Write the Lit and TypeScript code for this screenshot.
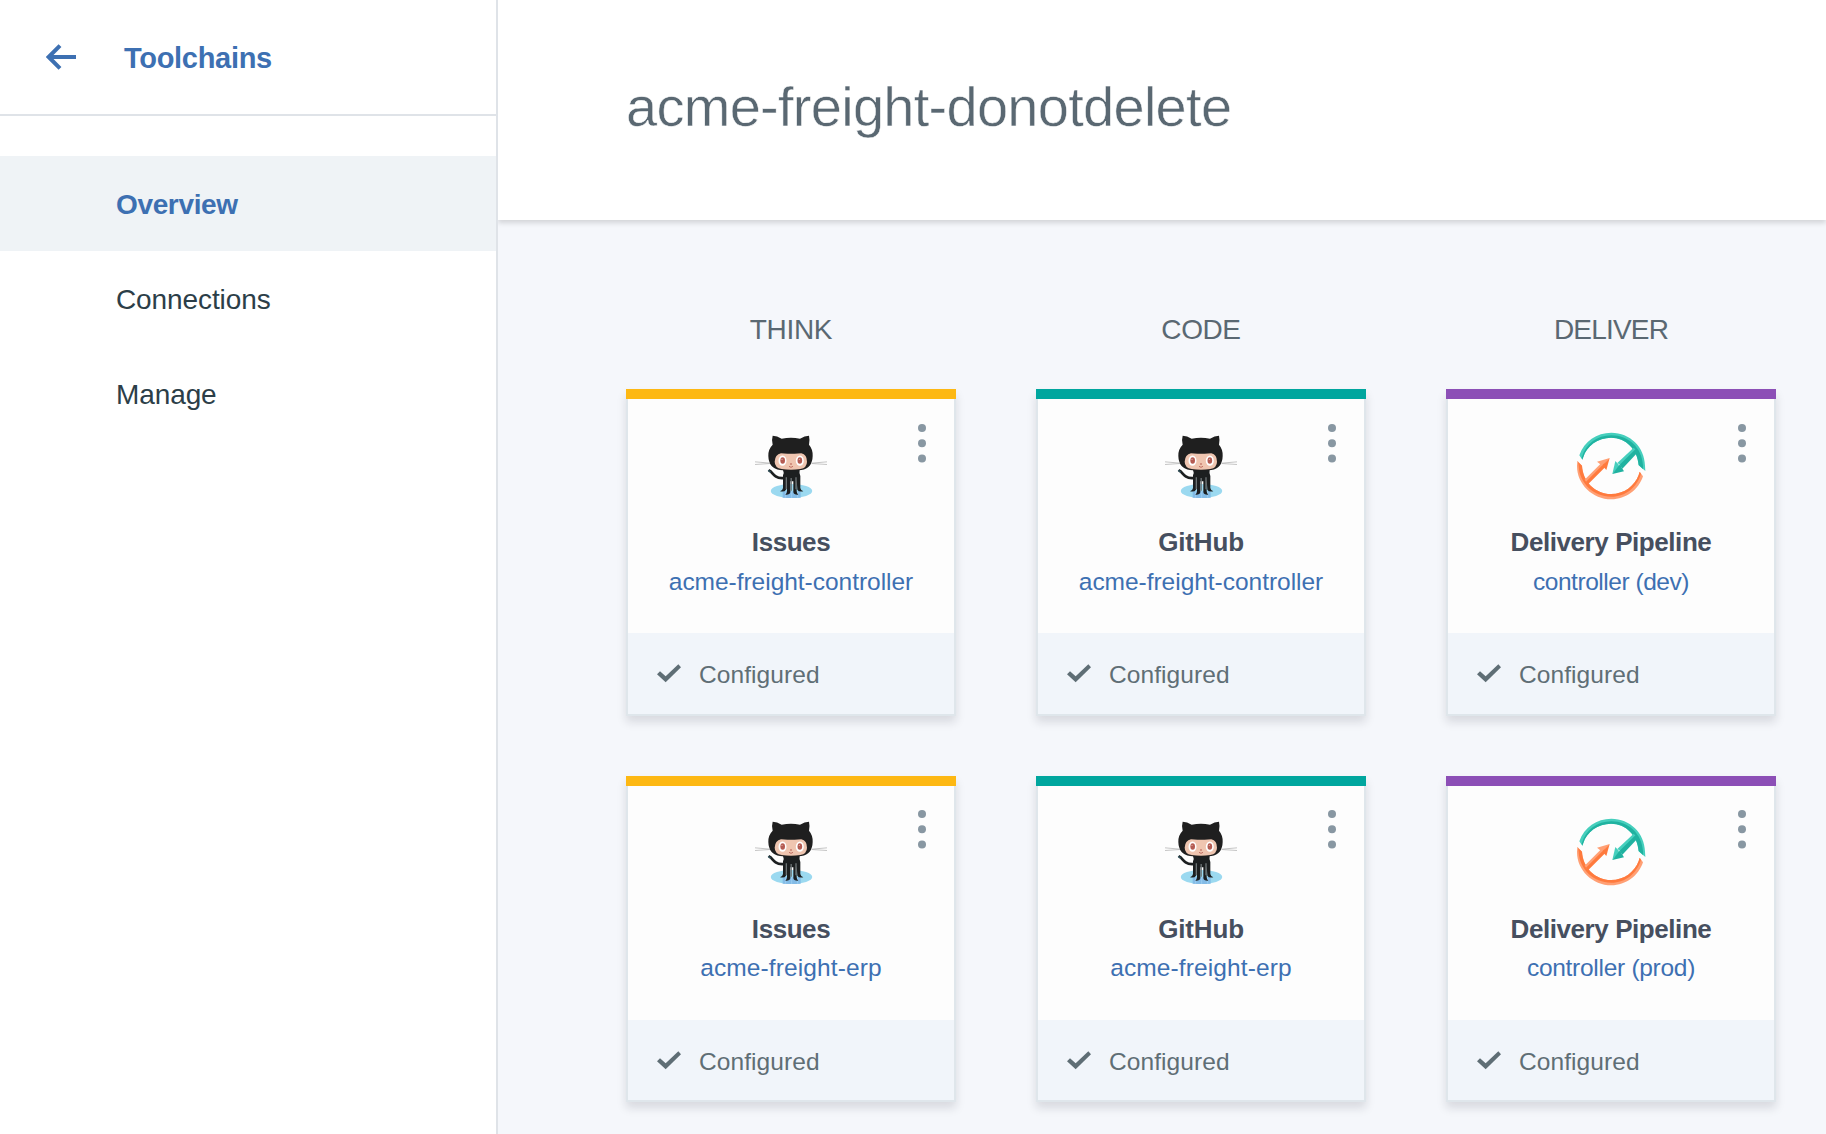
import { LitElement, html, svg, css } from "lit";
import { customElement, property } from "lit/decorators.js";

interface Tool {
  kind: "github" | "pipeline";
  name: string;
  nameTracking: number;
  link: string;
  linkTracking: number;
}

interface Stage {
  title: string;
  tracking: number;
  tone: "think" | "code" | "deliver";
  tools: Tool[];
}

const issues = { kind: "github", name: "Issues", nameTracking: -0.44 } as const;
const github = { kind: "github", name: "GitHub", nameTracking: -0.15 } as const;
const pipeline = { kind: "pipeline", name: "Delivery Pipeline", nameTracking: -0.43 } as const;
const controller = { link: "acme-freight-controller", linkTracking: -0.03 };
const erp = { link: "acme-freight-erp", linkTracking: 0.12 };

const STAGES: Stage[] = [
  {
    title: "THINK",
    tracking: -0.3,
    tone: "think",
    tools: [{ ...issues, ...controller }, { ...issues, ...erp }],
  },
  {
    title: "CODE",
    tracking: -0.4,
    tone: "code",
    tools: [{ ...github, ...controller }, { ...github, ...erp }],
  },
  {
    title: "DELIVER",
    tracking: -0.8,
    tone: "deliver",
    tools: [
      { ...pipeline, link: "controller (dev)", linkTracking: -0.46 },
      { ...pipeline, link: "controller (prod)", linkTracking: -0.28 },
    ],
  },
];

const octocat = svg`
  <svg class="logo" width="92" height="80" viewBox="0 -9 276 240" fill="none">
    <ellipse cx="139.500" cy="189" rx="62" ry="21" fill="#9bd9f0"/>
    <path d="M113 190h54v19q-27 2-54 0z" fill="#83bbe6"/>
    <path d="M122 190v19M140 190v20M158 190v19" stroke="#9bcdf0" stroke-width="3"/>
    <path d="M30 101.500l46 4M30 109.500l46-3M246 101.500l-46 4M246 109.500l-46-3" stroke="#a9a9a9" stroke-width="2"/>
    <path d="M71 127c10 4 12 12 21 18q10 7 26 5" stroke="#1c1f20" stroke-width="8"/>
    <path d="M69 127q5 2 8 6" stroke="#31545f" stroke-width="4"/>
    <path d="M114 126h50q-2 8 2 18v36q1 7 9 10-14 3-18-5l-2-30v34q0 8 5 11-14 1-15-8v-32h-9v32q-1 9-15 8 5-3 5-11v-34l-3 30q-4 8-18 5 8-3 9-10v-38q4-8 0-16z" fill="#1c1f20"/>
    <path d="M124 148v36M138.500 150v38M153 148v36" stroke="#6c7375" stroke-width="4"/>
    <path d="M83 23q13 0 27 9 28-5 55 0 14-9 27-9 3 13 0 27 12 14 11 34-1 37-34 42-32 4-64 0-34-5-35-42-1-20 13-34-4-13 0-27z" fill="#1f1f1f"/>
    <path d="M108 76q14 2 30 1 16 1 31-1 17 4 17 25 0 18-20 22-28 5-56 0-21-4-21-22 1-21 19-25z" fill="#efc5b0"/>
    <ellipse cx="112.500" cy="98" rx="12" ry="15.500" fill="#fff"/>
    <ellipse cx="164.500" cy="98" rx="12" ry="15.500" fill="#fff"/>
    <ellipse cx="113" cy="97.500" rx="7" ry="10" fill="#b45b52"/>
    <ellipse cx="164.500" cy="97.500" rx="7" ry="10" fill="#b45b52"/>
    <circle cx="111" cy="94" r="2" fill="#e6b5ad"/>
    <circle cx="163" cy="94" r="2" fill="#e6b5ad"/>
    <ellipse cx="138" cy="108" rx="2.800" ry="2" fill="#b45b52"/>
    <path d="M132 115q6 6 12 0" stroke="#b45b52" stroke-width="2.500"/>
  </svg>`;

const pipelineLogo = svg`
  <svg class="logo" width="82" height="80" viewBox="0 0 246 240" fill="none">
    <path d="M28 91C43 48 80 23 124 23c56 0 100 43 101 99l1 16-20-17C203 74 168 38 123 38 83 38 50 63 40 96l-3 8z" fill="#46cfbd"/>
    <path d="M35 98C47 57 81 31 124 31c52 0 92 38 95 90v11l-13-12C203 74 168 38 123 38 83 38 50 63 40 96l-3 8z" fill="#20b2a0"/>
    <path d="M191 68l7 7-45 46-11-7z" fill="#46cfbd"/>
    <path d="M197 72l8 8-48 51-8-12z" fill="#20b2a0"/>
    <path d="M127 147l9-39 9 10 3 7z" fill="#46cfbd"/>
    <path d="M127 147l23-29 4 8 8 13z" fill="#20b2a0"/>
    <path d="M22 107l14 15c2 46 39 85 87 85 39 0 71-24 83-57l3-10 10 14c-13 40-51 69-95 69C68 223 21 178 21 123z" fill="#ffa075"/>
    <path d="M24 111l12 11c2 46 39 85 87 85 39 0 71-24 83-57l3-10 4 6c-12 41-46 69-89 69C70 215 28 173 26 122z" fill="#ff7a3d"/>
    <path d="M44 164l53-53 7 7-53 56z" fill="#ffa075"/>
    <path d="M48 170l55-55 6 8-57 57z" fill="#ff7a3d"/>
    <path d="M119 99l-38 11 9 7 6 6z" fill="#ffa075"/>
    <path d="M119 99l-22 22 6 7 6 7z" fill="#ff7a3d"/>
  </svg>`;

@customElement("tool-card")
class ToolCard extends LitElement {
  @property({ attribute: false }) tool!: Tool;
  @property() tone = "think";

  static styles = css`
    :host {
      display: flex;
      flex-direction: column;
      position: relative;
      box-shadow: 0 6px 9px rgba(20, 25, 35, 0.13);
    }
    .bar {
      height: 10px;
      flex: none;
    }
    .think { background: #fdb813; }
    .code { background: #00a69e; }
    .deliver { background: #8c4fb6; }
    .panel {
      flex: 1;
      display: flex;
      flex-direction: column;
      border: 2px solid #dfe6eb;
      border-top: 0;
      background: #fdfdfd;
    }
    .body {
      height: 234px;
      box-sizing: border-box;
      padding-top: calc(26px - var(--lift, 0px));
      display: flex;
      flex-direction: column;
      align-items: center;
    }
    svg { display: block; flex: none; }
    .name {
      margin-top: calc(22px + var(--lift, 0px));
      font-weight: 700;
      font-size: 26px;
      line-height: 30px;
      color: #464f5f;
    }
    .link {
      margin-top: calc(10px - var(--lift, 0px));
      font-size: 24.5px;
      line-height: 30px;
      color: #3d70b2;
      text-decoration: none;
    }
    .status {
      flex: 1;
      display: flex;
      align-items: flex-start;
      gap: 18px;
      padding: 26.5px 0 0 29px;
      background: #f1f5fa;
      color: #5f6e75;
      font-size: 24.5px;
      line-height: 30px;
      letter-spacing: 0.08px;
    }
    .check { margin-top: 4.5px; }
    .menu {
      position: absolute;
      top: calc(35px - var(--lift, 0px));
      right: 30px;
    }
  `;

  render() {
    const t = this.tool;
    return html`
      <div class="bar ${this.tone}"></div>
      <div class="panel">
        <div class="body">
          ${t.kind === "github" ? octocat : pipelineLogo}
          <div class="name" style="letter-spacing:${t.nameTracking}px">${t.name}</div>
          <a class="link" style="letter-spacing:${t.linkTracking}px">${t.link}</a>
        </div>
        <div class="status">
          <svg class="check" width="24" height="19" viewBox="0 0 72 57">
            <path d="M0 31l9-9 17 15L64 1l8 9-46 45z" fill="#5f6e75"/>
          </svg>
          <span>Configured</span>
        </div>
      </div>
      <svg class="menu" width="8" height="39" viewBox="0 0 8 39" fill="#8897a2">
        <circle cx="4" cy="4" r="4"/>
        <circle cx="4" cy="19.300" r="4"/>
        <circle cx="4" cy="34.500" r="4"/>
      </svg>
    `;
  }
}

@customElement("app-root")
class AppRoot extends LitElement {
  static styles = css`
    :host {
      display: flex;
      width: 100%;
      height: 1134px;
      overflow: hidden;
      background: #f5f7fb;
      font-family: "Liberation Sans", Arial, sans-serif;
    }
    .side {
      width: 496px;
      flex: none;
      border-right: 2px solid #dfe3e8;
      background: #fff;
    }
    .back {
      height: 114px;
      display: flex;
      align-items: center;
      padding-left: 46px;
      border-bottom: 2px solid #dfe3e8;
      color: #3d70b2;
      font-size: 29px;
      font-weight: 700;
      letter-spacing: -0.3px;
    }
    .back svg { display: block; margin-right: 48px; }
    .back span { padding-top: 2px; }
    .nav { padding-top: 40px; }
    .item {
      height: 95px;
      box-sizing: border-box;
      display: flex;
      align-items: center;
      padding: 3px 0 0 116px;
      font-size: 28px;
      letter-spacing: -0.1px;
      color: #2c3e48;
    }
    .active {
      background: #eff3f6;
      color: #3d70b2;
      font-weight: 700;
      letter-spacing: -0.35px;
    }
    .main {
      flex: 1;
      min-width: 0;
      display: flex;
      flex-direction: column;
    }
    .head {
      height: 220px;
      flex: none;
      box-sizing: border-box;
      padding: 77px 0 0 128px;
      background: #fff;
      box-shadow: 0 3px 5px rgba(0, 0, 0, 0.14);
      clip-path: inset(0 0 -12px 0);
    }
    /* A hairline in the background colour thins the glyphs to a light weight. */
    h1 {
      margin: 0;
      font-size: 56px;
      line-height: 60px;
      font-weight: 400;
      letter-spacing: -0.72px;
      color: #5a6872;
      -webkit-text-stroke: 0.5px #fff;
    }
    .stages {
      display: flex;
      gap: 80px;
      padding: 95px 0 0 128px;
    }
    .stage {
      width: 330px;
      flex: none;
      display: flex;
      flex-direction: column;
    }
    h2 {
      margin: 0 0 44px;
      font-size: 28px;
      line-height: 30px;
      font-weight: 400;
      text-align: center;
      color: #5a6872;
    }
    .cards {
      display: grid;
      grid-template-rows: 327px 326px;
      gap: 60px;
    }
    tool-card + tool-card { --lift: 1px; }
  `;

  render() {
    return html`
      <aside class="side">
        <div class="back">
          <svg width="30" height="26" viewBox="0 0 90 78" fill="none" stroke="#3d70b2" stroke-width="12">
            <path d="M42 5L8 39l34 34M8 39h82"/>
          </svg>
          <span>Toolchains</span>
        </div>
        <nav class="nav">
          <div class="item active">Overview</div>
          <div class="item">Connections</div>
          <div class="item">Manage</div>
        </nav>
      </aside>
      <main class="main">
        <header class="head"><h1>acme-freight-donotdelete</h1></header>
        <section class="stages">
          ${STAGES.map(
            (s) => html`
              <div class="stage">
                <h2 style="letter-spacing:${s.tracking}px">${s.title}</h2>
                <div class="cards">
                  ${s.tools.map((t) => html`<tool-card .tool=${t} tone=${s.tone}></tool-card>`)}
                </div>
              </div>
            `
          )}
        </section>
      </main>
    `;
  }
}
